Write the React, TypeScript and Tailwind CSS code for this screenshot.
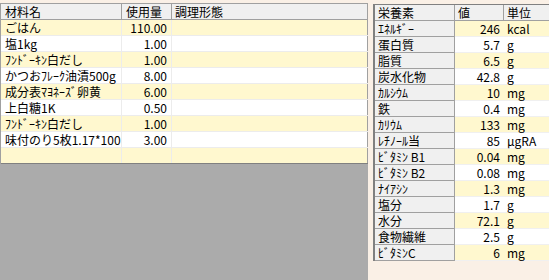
import React from 'react';

const ingredients = [
  { name: 'ごはん', qty: '110.00' },
  { name: '塩1kg', qty: '1.00' },
  { name: 'ﾌﾝﾄﾞｰｷﾝ白だし', qty: '1.00' },
  { name: 'かつおﾌﾚｰｸ油漬500g', qty: '8.00' },
  { name: '成分表ﾏﾖﾈｰｽﾞ卵黄', qty: '6.00' },
  { name: '上白糖1K', qty: '0.50' },
  { name: 'ﾌﾝﾄﾞｰｷﾝ白だし', qty: '1.00' },
  { name: '味付のり5枚1.17*100', qty: '3.00' },
  { name: '', qty: '' },
];

const nutrients = [
  { name: 'ｴﾈﾙｷﾞｰ', value: '246', unit: 'kcal' },
  { name: '蛋白質', value: '5.7', unit: 'g' },
  { name: '脂質', value: '6.5', unit: 'g' },
  { name: '炭水化物', value: '42.8', unit: 'g' },
  { name: 'ｶﾙｼｳﾑ', value: '10', unit: 'mg' },
  { name: '鉄', value: '0.4', unit: 'mg' },
  { name: 'ｶﾘｳﾑ', value: '133', unit: 'mg' },
  { name: 'ﾚﾁﾉｰﾙ当', value: '85', unit: 'μgRA' },
  { name: 'ﾋﾞﾀﾐﾝ B1', value: '0.04', unit: 'mg' },
  { name: 'ﾋﾞﾀﾐﾝ B2', value: '0.08', unit: 'mg' },
  { name: 'ﾅｲｱｼﾝ', value: '1.3', unit: 'mg' },
  { name: '塩分', value: '1.7', unit: 'g' },
  { name: '水分', value: '72.1', unit: 'g' },
  { name: '食物繊維', value: '2.5', unit: 'g' },
  { name: 'ﾋﾞﾀﾐﾝC', value: '6', unit: 'mg' },
];

const font = { fontFamily: '"Noto Sans CJK JP", "Liberation Sans", sans-serif' };

export default function App() {
  return (
    <div
      className="w-[549px] h-[280px] flex bg-[#faf0e6] text-[12px] leading-[15px] text-black overflow-hidden"
      style={font}
    >
      {/* Ingredient list */}
      <div className="w-[368px] flex flex-col pt-[3px]">
        <div className="border-t border-l border-[#a0a0a0] bg-white">
          <div className="flex h-[16px] bg-[#f0f0f0] border-b border-[#a0a0a0]">
            <div className="w-[121px] px-[4px] border-r border-[#a0a0a0]">材料名</div>
            <div className="w-[50px] px-[4px] border-r border-[#a0a0a0]">使用量</div>
            <div className="flex-1 px-[3px] border-r border-[#a0a0a0]">調理形態</div>
          </div>
          {ingredients.map((row, i) => (
            <div
              key={i}
              className={`flex h-[16px] border-b ${
                i === ingredients.length - 1 ? 'border-[#808080]' : 'border-[#ececec]'
              } ${i % 2 === 0 ? 'bg-[#fff8cf]' : 'bg-white'}`}
            >
              <div className="w-[121px] px-[4px] border-r border-[#ececec] whitespace-nowrap">{row.name}</div>
              <div className="w-[50px] px-[4px] border-r border-[#ececec] text-right">{row.qty}</div>
              <div className="flex-1 border-r border-[#a0a0a0]"></div>
            </div>
          ))}
        </div>
        <div className="flex-1 bg-[#ababab]"></div>
      </div>

      {/* Nutrient list */}
      <div className="flex-1 pl-[5px] pt-[4px]">
        <div className="border-t border-l-2 border-[#808080]">
          <div className="flex h-[16px] bg-[#f0f0f0] border-b border-[#a0a0a0]">
            <div className="w-[80px] px-[3px] border-r border-[#a0a0a0]">栄養素</div>
            <div className="w-[49px] px-[3px] border-r border-[#a0a0a0]">値</div>
            <div className="flex-1 px-[3px]">単位</div>
          </div>
          {nutrients.map((row, i) => (
            <div key={i} className={`flex h-[16px] ${i % 2 === 0 ? 'bg-[#fff8cf]' : 'bg-white'}`}>
              <div className="w-[80px] px-[3px] bg-[#f0f0f0] border-r border-b border-[#a0a0a0] whitespace-nowrap">
                {row.name}
              </div>
              <div className="w-[49px] px-[4px] text-right border-b border-[#f0f0f0]">{row.value}</div>
              <div className="flex-1 px-[3px] border-b border-[#f0f0f0]">{row.unit}</div>
            </div>
          ))}
        </div>
      </div>
    </div>
  );
}
